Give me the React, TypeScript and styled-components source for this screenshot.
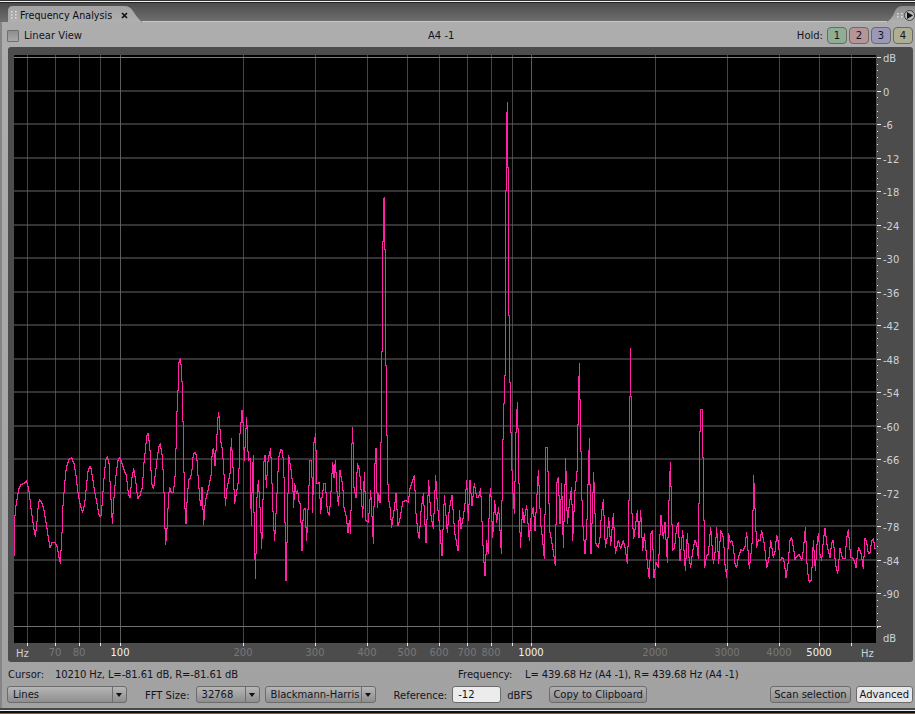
import styled, { createGlobalStyle } from "styled-components";

const GlobalStyle = createGlobalStyle`
    html, body {
        margin: 0;
        padding: 0;
        background: #4a4a4a;
    }
    * {
        box-sizing: border-box;
    }
`;

type Pt = [number, number];

// traced spectrum, "x,y ..." read at 3x around y = 340
const seg = (x0: number, s: string): Pt[] =>
    s.split(" ").map((p) => {
        const [a, b] = p.split(",").map(Number);
        return [x0 + a / 3, 340 + b / 3] as Pt;
    });

const PART_A = "43,645 43,550 47,500 52,470 57,445 63,433 72,428 80,421 86,445 92,495 98,540 103,575 106,587 110,555 115,490 119,478 126,488 132,510 138,545 144,585 150,620 157,605 166,607 172,620 177,652 181,668 186,575 188,510 192,455 197,395 202,370 208,355 215,352 222,370 228,405 235,465 241,495 248,515 254,490 260,430 265,385 272,377 278,415 285,460 292,495 298,528 304,525 311,425 317,358 322,349 327,370 332,460 337,550 343,455 349,395 354,360 359,352 366,368 373,390 379,405 385,460 390,472 396,410 401,385 407,420 413,475 420,465 427,440 432,365 437,320 440,285 445,278 450,330 455,430 461,445 466,400 470,365 476,320 481,310 487,350 490,405 493,480 495,565 497,612 501,565 506,462 509,440 514,455 520,455 526,400 528,325 530,235 534,150 537,65 541,55 545,90 548,190 551,350 554,490 558,548 562,465 566,420 571,412 575,400 580,340 584,335 590,345 595,420 600,480 603,495 606,440 611,553 616,480 622,460 627,435 633,405 637,330 641,325 645,375 650,300 655,215 658,235 662,300 667,325 671,380 676,495 680,450 685,425 690,400 694,295 699,380 704,490 708,465 712,440 716,420 720,280 726,210 730,260 733,360 736,300 740,230 745,360 750,355 754,555 757,405 760,345 763,600 767,715 770,485 775,420 780,500 785,625 788,530 791,370 795,345 799,440 803,370 806,350 812,325 817,455 820,540 824,600 830,480 836,350 843,328 848,330 853,430 858,720 862,570 866,345 872,380 878,430 881,500 884,430 889,460 893,450 898,490";
const PART_B = "0,490 3,545 6,630 10,510 15,505 20,600 26,460 30,360 35,360 38,515 42,305 47,280 50,430 58,425 62,520 66,470 72,430 76,430 82,510 88,525 92,470 98,365 102,410 106,360 112,470 116,495 120,390 128,435 132,500 138,525 144,575 148,540 152,578 156,310 158,260 162,440 168,470 172,370 178,385 182,430 188,530 193,395 198,540 205,545 212,450 220,608 224,385 228,325 232,500 236,460 240,485 244,245 248,-177 250,-417 253,-429 255,-273 258,75 262,355 265,470 270,500 275,560 282,510 288,460 294,555 300,535 308,485 316,480 325,485 330,445 338,420 343,405 348,520 353,570 358,595 362,520 370,460 378,605 386,420 392,520 400,565 407,405 412,490 420,570 426,645 433,465 442,575 448,505 456,465 464,575 474,630 478,510 483,565 490,530 495,490 500,420 505,540 510,420 516,495 523,430 530,470 536,470 542,445 550,640 555,705 560,600 565,640 568,480 572,445 578,590 584,480 590,545 596,500 604,640 607,400 610,245 615,105 616,-249 620,-654 622,-714 624,-519 626,-141 630,125 633,275 637,430 643,520 648,275 652,185 655,305 658,490 661,620 668,505 672,545 680,495 688,600 692,540 700,500 705,570 715,390 722,550 728,600 733,655 738,320 742,320 745,430 750,575 758,620 766,675 770,430 775,410 780,550 785,430 790,620 797,355 802,550 808,490 815,440 818,600 825,450 832,385 835,185 838,70 842,285 847,530 855,640 860,570 868,295 873,640 881,395 888,610 895,620 900,590";
const PART_C = "0,580 5,515 10,478 16,620 22,590 26,530 32,615 40,520 46,640 55,600 62,625 70,600 75,620 82,670 86,565 89,310 91,25 94,240 96,520 101,595 106,560 112,510 117,590 122,510 128,630 133,580 140,650 148,715 153,580 157,570 162,710 168,665 175,680 183,525 190,595 195,545 202,665 207,480 211,365 214,475 218,630 224,620 235,545 240,660 248,570 256,690 262,580 272,680 278,630 285,600 295,655 298,405 301,208 306,208 310,400 314,680 325,640 332,560 340,670 350,560 356,670 362,570 370,590 380,710 386,580 395,600 405,670 415,650 430,630 440,575 448,685 456,610 459,510 461,405 464,480 470,620 480,600 485,570 500,680 512,600 520,650 530,585 540,660 548,650 558,710 570,600 580,620 590,650 605,660 616,560 622,690 634,720 640,600 646,690 655,580 665,660 675,565 690,650 700,600 713,700 720,625 735,655 745,568 752,650 768,680 775,620 790,685 795,595 805,640 815,600 825,625";

// the noise floor on the right is finer than what was traced, so split long runs
const densify = (pts: Pt[]): Pt[] => {
    const out: Pt[] = [];
    pts.forEach((p, i) => {
        const prev = pts[i - 1];
        if (prev && p[0] > 640 && p[0] - prev[0] >= 3) {
            const sign = i % 2 === 0 ? -1 : 1;
            out.push([(prev[0] + p[0]) / 2, (prev[1] + p[1]) / 2 + sign * (4 + (i % 4))]);
        }
        out.push(p);
    });
    return out;
};

// one vertical span per pixel column, as the analyser itself draws
const spectrumPath = (pts: Pt[]) => {
    const spans = new Map<number, [number, number]>();
    const put = (x: number, y: number) => {
        const s = spans.get(x);
        if (s) {
            s[0] = Math.min(s[0], y);
            s[1] = Math.max(s[1], y);
        } else {
            spans.set(x, [y, y]);
        }
    };
    pts.forEach((p, i) => {
        const prev = pts[i - 1];
        if (!prev) return;
        const c0 = Math.floor(prev[0]);
        const c1 = Math.floor(p[0]);
        for (let c = c0; c <= c1; c++) {
            const from = Math.max(c, prev[0]);
            const to = Math.min(c + 1, p[0]);
            const dx = p[0] - prev[0] || 1;
            put(c, prev[1] + ((from - prev[0]) / dx) * (p[1] - prev[1]));
            put(c, prev[1] + ((to - prev[0]) / dx) * (p[1] - prev[1]));
        }
    });
    return [...spans.entries()]
        .map(([x, [a, b]]) => `M${x + 0.5} ${Math.round(a)}V${Math.round(b) + 1}`)
        .join("");
};

const SPECTRUM = spectrumPath(densify([...seg(0, PART_A), ...seg(300, PART_B), ...seg(600, PART_C)]));

const FREQ_LINES = [27, 55, 79, 100, 120, 243, 315, 367, 407, 439, 467, 491, 512, 531, 655, 727, 779, 819, 851];
const FREQ_LABELS = [
    { x: 55, t: "70" }, { x: 79, t: "80" }, { x: 120, t: "100", on: true }, { x: 243, t: "200" },
    { x: 315, t: "300" }, { x: 367, t: "400" }, { x: 407, t: "500" }, { x: 439, t: "600" },
    { x: 467, t: "700" }, { x: 491, t: "800" }, { x: 531, t: "1000", on: true }, { x: 655, t: "2000" },
    { x: 727, t: "3000" }, { x: 779, t: "4000" }, { x: 819, t: "5000", on: true },
];
const DB_VALUES = Array.from({ length: 16 }, (_, i) => i * -6);
const dbY = (db: number) => Math.round(90.5 - (db / 6) * 33.5);
const DOTS = Array.from({ length: 86 }, (_, i) => 57 + i * 6.7);

const Chart = () => (
    <ChartSvg viewBox="8 47 905 615" width={905} height={615}>
        <rect x={14} y={55} width={862} height={588} fill="#000" />
        {FREQ_LINES.map((x) => (
            <line key={x} x1={x + 0.5} x2={x + 0.5} y1={55} y2={643} stroke={x === 120 || x === 531 ? "#5c5c5c" : "#454545"} />
        ))}
        <line x1={14} x2={876} y1={57.5} y2={57.5} stroke="#808080" />
        <line x1={14} x2={876} y1={626.5} y2={626.5} stroke="#707070" />
        {DB_VALUES.map((db) => (
            <line key={db} x1={14} x2={876} y1={dbY(db)} y2={dbY(db)} stroke="#666" />
        ))}
        <path d={SPECTRUM} fill="none" stroke="#ff22a4" strokeWidth={1} shapeRendering="crispEdges" />
        {DOTS.map((y) => (
            <rect key={y} x={877} y={Math.round(y)} width={1} height={1} fill="#e8e8e8" />
        ))}
        {[57, ...DB_VALUES.map(dbY), 626].map((y, i) => (
            <rect key={i} x={877} y={y} width={4} height={1} fill="#e8e8e8" />
        ))}
        {FREQ_LINES.map((x) => (
            <rect key={x} x={x} y={643} width={1} height={3} fill="#e8e8e8" />
        ))}
        <AxisText x={883} y={62}>dB</AxisText>
        {DB_VALUES.map((db) => (
            <AxisText key={db} x={883} y={dbY(db) + 5}>{db}</AxisText>
        ))}
        <AxisText x={883} y={642}>dB</AxisText>
        <AxisText x={16} y={657}>Hz</AxisText>
        <AxisText x={861} y={657}>Hz</AxisText>
        {FREQ_LABELS.map((l) => (
            <FreqText key={l.t} x={l.x} y={656} $on={!!l.on}>{l.t}</FreqText>
        ))}
    </ChartSvg>
);

const Select = ({ label, width }: { label: string; width: number }) => (
    <SelectBox $width={width}>
        <SelectLabel>{label}</SelectLabel>
        <SelectArrow />
    </SelectBox>
);

const App = () => (
    <>
        <GlobalStyle />
        <Frame>
            <TopEdge />
            <TabBar>
                <Tab>
                    <Grip width={7} height={10} viewBox="0 0 7 10">
                        {[1, 4, 7].map((y) => [1, 5].map((x) => <rect key={`${x}${y}`} x={x} y={y} width={1.6} height={1.6} fill="#ddd" />))}
                    </Grip>
                    <TabTitle>Frequency Analysis</TabTitle>
                    <svg width={7} height={7} viewBox="0 0 7 7">
                        <path d="M1 1 L6 6 M6 1 L1 6" stroke="#111" strokeWidth={1.7} />
                    </svg>
                </Tab>
                <TabFill />
                <MenuTab>
                    <Grip width={7} height={7} viewBox="0 0 7 7">
                        {[1, 4].map((y) => [1, 5].map((x) => <rect key={`${x}${y}`} x={x} y={y} width={1.5} height={1.5} fill="#ddd" />))}
                    </Grip>
                    <PlayButton>
                        <svg width={6} height={7} viewBox="0 0 6 7"><path d="M0 0 L6 3.5 L0 7 Z" fill="#111" /></svg>
                    </PlayButton>
                </MenuTab>
            </TabBar>
            <Panel>
                <Toolbar>
                    <CheckLabel>
                        <CheckBox />
                        <Text>Linear View</Text>
                    </CheckLabel>
                    <Center><Text>A4 -1</Text></Center>
                    <HoldGroup>
                        <Text>Hold:</Text>
                        <HoldButton $color="#8fae93">1</HoldButton>
                        <HoldButton $color="#b59595">2</HoldButton>
                        <HoldButton $color="#9a98b8">3</HoldButton>
                        <HoldButton $color="#aeae92">4</HoldButton>
                    </HoldGroup>
                </Toolbar>
                <PlotPanel>
                    <Chart />
                </PlotPanel>
                <ReadoutRow>
                    <ReadLabel $width={47}>Cursor:</ReadLabel>
                    <ReadValue $width={403}>10210 Hz, L=-81.61 dB, R=-81.61 dB</ReadValue>
                    <ReadLabel $width={67}>Frequency:</ReadLabel>
                    <ReadValue>L= 439.68 Hz (A4 -1), R= 439.68 Hz (A4 -1)</ReadValue>
                </ReadoutRow>
                <ControlRow>
                    <Select label="Lines" width={120} />
                    <ControlLabel $left={18}>FFT Size:</ControlLabel>
                    <Gap $w={6} />
                    <Select label="32768" width={64} />
                    <Gap $w={5} />
                    <Select label="Blackmann-Harris" width={111} />
                    <ControlLabel $left={18}>Reference:</ControlLabel>
                    <NumberInput>-12</NumberInput>
                    <ControlLabel $left={6}>dBFS</ControlLabel>
                    <Button $left={17}>Copy to Clipboard</Button>
                    <Spacer />
                    <Button>Scan selection</Button>
                    <Button $left={5} $light>Advanced</Button>
                </ControlRow>
            </Panel>
            <BottomEdge />
        </Frame>
    </>
);

const font = `font-family: "DejaVu Sans", sans-serif; font-size: 10px;`;

const Frame = styled.div`
    width: 915px;
    height: 714px;
    display: flex;
    flex-direction: column;
    overflow: hidden;
    background: #4a4a4a;
    ${font}
    color: #14141e;
`;

const TopEdge = styled.div`
    height: 3px;
    flex: none;
    background: linear-gradient(#333 0 1px, #f0f0f0 1px 2px, #222 2px);
`;

const TabBar = styled.div`
    height: 19px;
    flex: none;
    display: flex;
    align-items: flex-end;
    padding-left: 8px;
    background: linear-gradient(#4c4c4c, #707070);
`;

const Tab = styled.div`
    width: 134px;
    height: 16px;
    display: flex;
    align-items: center;
    gap: 3px;
    padding: 2px 0 0 2px;
    background: linear-gradient(#a2a2a2, #b0b0b0);
    clip-path: path("M0 16 L0 5 Q0 0 5 0 L116 0 Q122 0 125 5 Q130 13 134 16 Z");
`;

const TabTitle = styled.span`
    width: 98px;
    font-size: 9.6px;
    white-space: nowrap;
    color: #0c0c14;
`;

const Grip = styled.svg`
    flex: none;
`;

const TabFill = styled.div`
    flex: 1;
    height: 1px;
    background: #c8c8c8;
`;

const MenuTab = styled.div`
    width: 28px;
    height: 16px;
    display: flex;
    align-items: center;
    gap: 1px;
    padding: 2px 0 0 9px;
    background: linear-gradient(#8a8a8a, #b0b0b0);
    clip-path: path("M0 16 Q5 13 8 5 Q10 0 16 0 L28 0 L28 16 Z");
`;

const PlayButton = styled.div`
    width: 11px;
    height: 11px;
    flex: none;
    display: flex;
    align-items: center;
    justify-content: center;
    padding-left: 1px;
    border-radius: 50%;
    border: 1px solid #444;
    background: #b8b8b8;
`;

const Panel = styled.div`
    flex: 1;
    display: flex;
    flex-direction: column;
    padding: 0 0 0 2px;
    background: linear-gradient(90deg, #858585 0 2px, transparent 2px), linear-gradient(#adadad, #a2a2a2);
`;

const Toolbar = styled.div`
    height: 25px;
    flex: none;
    display: flex;
    align-items: center;
    padding: 2px 2px 0 5px;
`;

const Text = styled.span`
    white-space: nowrap;
`;

const CheckLabel = styled.div`
    width: 264px;
    display: flex;
    align-items: center;
    gap: 5px;
`;

const CheckBox = styled.div`
    width: 12px;
    height: 12px;
    border: 1px solid #707070;
    border-radius: 1px;
    background: linear-gradient(#8e8e8e, #a8a8a8);
`;

const Center = styled.div`
    width: 350px;
    padding-left: 157px;
`;

const HoldGroup = styled.div`
    flex: 1;
    display: flex;
    align-items: center;
    justify-content: flex-end;
    gap: 2px;
`;

const HoldButton = styled.div<{ $color: string }>`
    width: 20px;
    height: 17px;
    display: flex;
    align-items: center;
    justify-content: center;
    border: 1px solid #6a6a6a;
    border-radius: 4px;
    background: ${({ $color }) => $color};
    &:first-of-type {
        margin-left: 2px;
    }
`;

const PlotPanel = styled.div`
    height: 615px;
    width: 905px;
    flex: none;
    margin-left: 6px;
    background: #4c4c4c;
    border-radius: 3px;
`;

const ChartSvg = styled.svg`
    display: block;
`;

const AxisText = styled.text`
    ${font}
    fill: #ccd2dc;
`;

const FreqText = styled.text<{ $on: boolean }>`
    ${font}
    text-anchor: middle;
    fill: ${({ $on }) => ($on ? "#f2f2f2" : "#777")};
`;

const ReadoutRow = styled.div`
    height: 24px;
    flex: none;
    display: flex;
    align-items: center;
    padding-left: 6px;
`;

const ReadLabel = styled.div<{ $width: number }>`
    width: ${({ $width }) => $width}px;
    flex: none;
`;

const ReadValue = styled.div<{ $width?: number }>`
    ${({ $width }) => $width && `width: ${$width}px;`}
    flex: none;
    letter-spacing: -0.12px;
    white-space: nowrap;
`;

const ControlRow = styled.div`
    height: 22px;
    flex: none;
    display: flex;
    align-items: flex-start;
    padding: 0 0 0 5px;
`;

const SelectBox = styled.div<{ $width: number }>`
    width: ${({ $width }) => $width}px;
    height: 17px;
    flex: none;
    display: flex;
    border: 1px solid #6c6c6c;
    border-radius: 3px;
    background: linear-gradient(#b6b6b6, #8e8e8e);
`;

const SelectLabel = styled.div`
    flex: 1;
    padding-left: 5px;
    line-height: 15px;
    white-space: nowrap;
    overflow: hidden;
`;

const SelectArrow = styled.div`
    width: 14px;
    flex: none;
    position: relative;
    border-left: 1px solid #6c6c6c;
    &::after {
        content: "";
        position: absolute;
        left: 3px;
        top: 6px;
        border-left: 3.5px solid transparent;
        border-right: 3.5px solid transparent;
        border-top: 4px solid #111;
    }
`;

const ControlLabel = styled.div<{ $left: number }>`
    margin-left: ${({ $left }) => $left}px;
    line-height: 18px;
    padding-top: 1px;
    white-space: nowrap;
`;

const Gap = styled.div<{ $w: number }>`
    width: ${({ $w }) => $w}px;
    flex: none;
`;

const Spacer = styled.div`
    flex: 1;
`;

const NumberInput = styled.div`
    width: 49px;
    height: 17px;
    margin-left: 5px;
    padding-left: 5px;
    line-height: 15px;
    flex: none;
    border: 1px solid #6c6c6c;
    border-radius: 3px;
    background: #ececec;
`;

const Button = styled.div<{ $left?: number; $light?: boolean }>`
    height: 17px;
    padding: 0 3px;
    margin-left: ${({ $left }) => $left ?? 0}px;
    line-height: 15px;
    white-space: nowrap;
    border: 1px solid #6c6c6c;
    border-radius: 3px;
    background: ${({ $light }) => ($light ? "#e6e6e6" : "linear-gradient(#b0b0b0, #8e8e8e)")};
    &:last-child {
        margin-right: 2px;
    }
`;

const BottomEdge = styled.div`
    height: 6px;
    flex: none;
    background: linear-gradient(#484848 0 2px, #f0f0f0 2px 3px, #111 3px 5px, #a84a34 5px);
`;

export default App;
